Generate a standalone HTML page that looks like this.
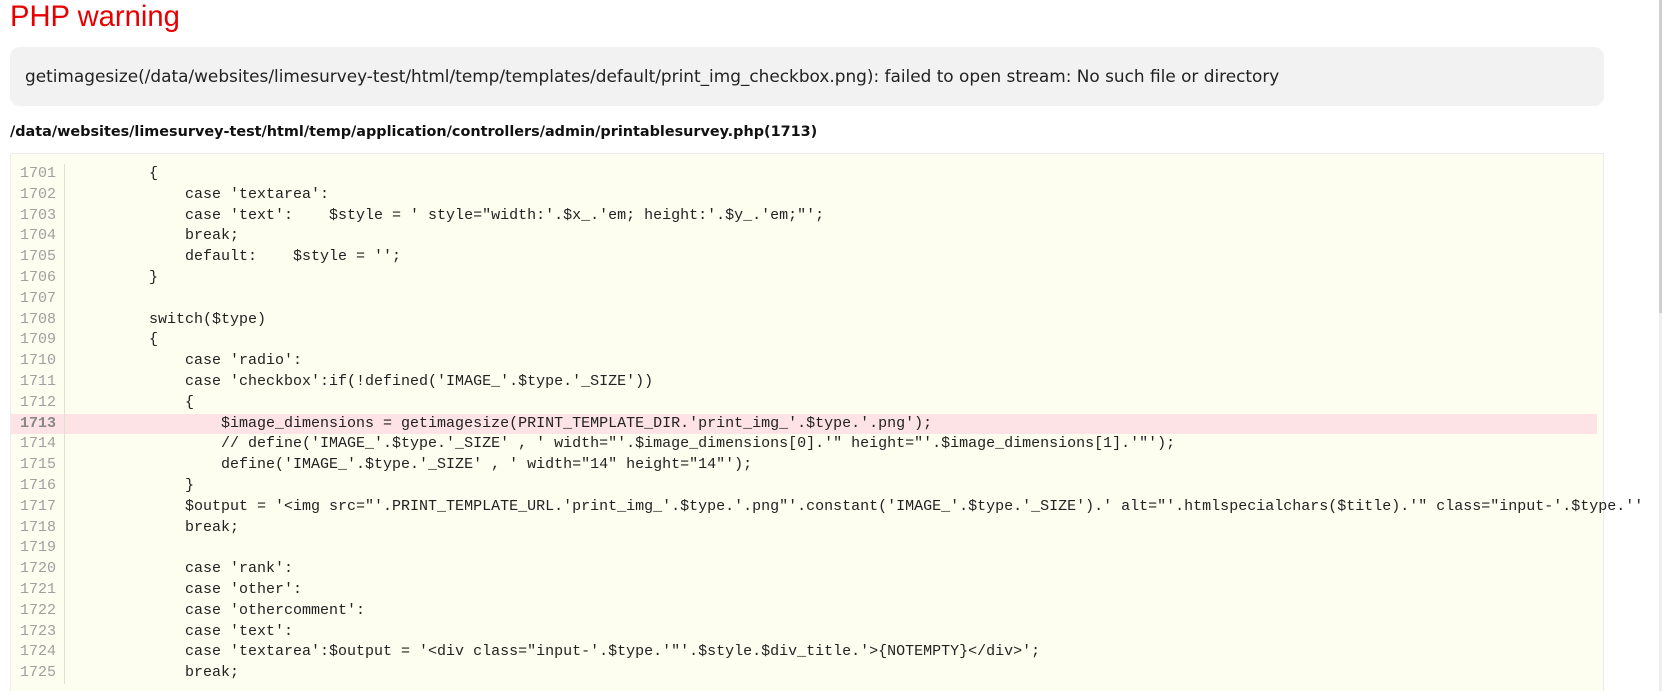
<!DOCTYPE html>
<html><head><meta charset="utf-8"><style>
html,body{margin:0;padding:0;background:#fff;width:1663px;height:691px;overflow:hidden;position:relative}
body{font-family:"DejaVu Sans","Liberation Sans",sans-serif;color:#111}
h1{position:absolute;left:10px;top:1px;margin:0;font-family:"Liberation Sans",sans-serif;font-weight:normal;font-size:29.2px;color:#e80000}
.msg{position:absolute;left:10px;top:47px;width:1594px;height:59px;background:#f2f2f2;border-radius:10px;box-sizing:border-box;padding-left:15px;line-height:59px;font-size:16.9px;color:#222}
.path{position:absolute;left:10px;top:124px;font-weight:bold;font-size:14.4px;color:#111}
.code{position:absolute;left:10px;top:153px;width:1594px;height:560px;background:#fdfdf0;border:1px solid #ececec;box-sizing:border-box}
.row{position:absolute;left:0;height:20.8px;line-height:20.8px;font-family:"Liberation Mono",monospace;font-size:15px;white-space:pre;width:1700px}
.row .n{display:inline-block;width:45px;text-align:right;color:#a0a0a0;}
.row .g{position:absolute;left:53px;top:0;bottom:0;border-left:1px solid #e0e0d0}
.row .c{position:absolute;left:66px;top:0;color:#222}
.row.hl{background:#fde3e5;width:1586px}
.row.hl .n{font-weight:bold;color:#888}
.sb{position:absolute;left:1659px;top:0;width:3px;height:313px;background:#cfcfcf}
.sb2{position:absolute;left:1659px;top:313px;width:3px;height:378px;background:#efefef}
</style></head><body>
<h1>PHP warning</h1>
<div class="msg">getimagesize(/data/websites/limesurvey-test/html/temp/templates/default/print_img_checkbox.png): failed to open stream: No such file or directory</div>
<div class="path">/data/websites/limesurvey-test/html/temp/application/controllers/admin/printablesurvey.php(1713)</div>
<div class="code">
<div class="row" style="top:10px"><span class="n">1701</span><span class="g"></span><span class="c">        {</span></div>
<div class="row" style="top:30.8px"><span class="n">1702</span><span class="g"></span><span class="c">            case 'textarea':</span></div>
<div class="row" style="top:51.6px"><span class="n">1703</span><span class="g"></span><span class="c">            case 'text':    $style = ' style="width:'.$x_.'em; height:'.$y_.'em;"';</span></div>
<div class="row" style="top:72.4px"><span class="n">1704</span><span class="g"></span><span class="c">            break;</span></div>
<div class="row" style="top:93.2px"><span class="n">1705</span><span class="g"></span><span class="c">            default:    $style = '';</span></div>
<div class="row" style="top:114px"><span class="n">1706</span><span class="g"></span><span class="c">        }</span></div>
<div class="row" style="top:134.8px"><span class="n">1707</span><span class="g"></span><span class="c"></span></div>
<div class="row" style="top:155.6px"><span class="n">1708</span><span class="g"></span><span class="c">        switch($type)</span></div>
<div class="row" style="top:176.4px"><span class="n">1709</span><span class="g"></span><span class="c">        {</span></div>
<div class="row" style="top:197.2px"><span class="n">1710</span><span class="g"></span><span class="c">            case 'radio':</span></div>
<div class="row" style="top:218px"><span class="n">1711</span><span class="g"></span><span class="c">            case 'checkbox':if(!defined('IMAGE_'.$type.'_SIZE'))</span></div>
<div class="row" style="top:238.8px"><span class="n">1712</span><span class="g"></span><span class="c">            {</span></div>
<div class="row hl" style="top:259.6px"><span class="n">1713</span><span class="g"></span><span class="c">                $image_dimensions = getimagesize(PRINT_TEMPLATE_DIR.'print_img_'.$type.'.png');</span></div>
<div class="row" style="top:280.4px"><span class="n">1714</span><span class="g"></span><span class="c">                // define('IMAGE_'.$type.'_SIZE' , ' width="'.$image_dimensions[0].'" height="'.$image_dimensions[1].'"');</span></div>
<div class="row" style="top:301.2px"><span class="n">1715</span><span class="g"></span><span class="c">                define('IMAGE_'.$type.'_SIZE' , ' width="14" height="14"');</span></div>
<div class="row" style="top:322px"><span class="n">1716</span><span class="g"></span><span class="c">            }</span></div>
<div class="row" style="top:342.8px"><span class="n">1717</span><span class="g"></span><span class="c">            $output = '&lt;img src="'.PRINT_TEMPLATE_URL.'print_img_'.$type.'.png"'.constant('IMAGE_'.$type.'_SIZE').' alt="'.htmlspecialchars($title).'" class="input-'.$type.''</span></div>
<div class="row" style="top:363.6px"><span class="n">1718</span><span class="g"></span><span class="c">            break;</span></div>
<div class="row" style="top:384.4px"><span class="n">1719</span><span class="g"></span><span class="c"></span></div>
<div class="row" style="top:405.2px"><span class="n">1720</span><span class="g"></span><span class="c">            case 'rank':</span></div>
<div class="row" style="top:426px"><span class="n">1721</span><span class="g"></span><span class="c">            case 'other':</span></div>
<div class="row" style="top:446.8px"><span class="n">1722</span><span class="g"></span><span class="c">            case 'othercomment':</span></div>
<div class="row" style="top:467.6px"><span class="n">1723</span><span class="g"></span><span class="c">            case 'text':</span></div>
<div class="row" style="top:488.4px"><span class="n">1724</span><span class="g"></span><span class="c">            case 'textarea':$output = '&lt;div class="input-'.$type.'"'.$style.$div_title.'&gt;{NOTEMPTY}&lt;/div&gt;';</span></div>
<div class="row" style="top:509.2px"><span class="n">1725</span><span class="g"></span><span class="c">            break;</span></div>
</div>
<div class="sb"></div><div class="sb2"></div>
</body></html>
